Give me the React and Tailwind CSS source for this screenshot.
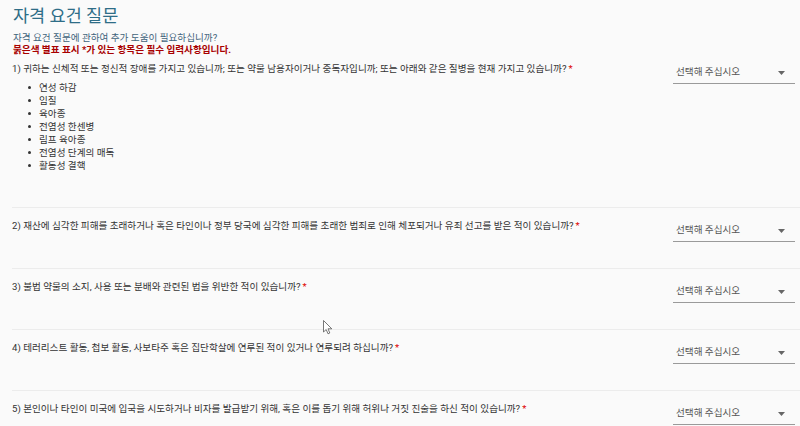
import React from "react";

const FONT = { fontFamily: 'Roboto, "Noto Sans CJK KR", "Noto Sans", sans-serif' };

function Select() {
  return (
    <div className="w-[122px] shrink-0 mt-[6px] mr-[5px] h-[22px] border-b border-[#9a9a9a] flex items-center justify-between pl-[3px] pr-[10px]">
      <span className="text-[9.6px] text-[#555]">선택해 주십시오</span>
      <svg width="7" height="4" viewBox="0 0 7 4"><path d="M0 0 L7 0 L3.5 4 Z" fill="#666" /></svg>
    </div>
  );
}

function Row({ num, text, children, h, first }) {
  return (
    <div className={`flex justify-between items-start ${first ? "" : "border-t border-[#ececec]"} ${h}`}>
      <div className={first ? "pt-[7px]" : "pt-[12px]"}>
        <p className="text-[9.6px] leading-[12px] text-[#333]">
          {num}) {text}<span className="text-[#d00] ml-[2px]">*</span>
        </p>
        {children}
      </div>
      <div className={first ? "pt-[0px]" : "pt-[6px]"}>
        <Select />
      </div>
    </div>
  );
}

export default function App() {
  const items = ["연성 하감", "임질", "육아종", "전염성 한센병", "림프 육아종", "전염성 단계의 매독", "활동성 결핵"];
  return (
    <div className="w-[800px] h-[426px] bg-[#fafafa] overflow-hidden relative" style={FONT}>
      <div className="pl-[12px]">
        <h1 className="text-[17.5px] leading-[30px] text-[#2e6d87] pl-[1px] pt-[1px]">자격 요건 질문</h1>
        <p className="text-[9.6px] leading-[12px] text-[#41637a] mt-[1px] pl-[1px]">자격 요건 질문에 관하여 추가 도움이 필요하십니까?</p>
        <p className="text-[9.6px] leading-[12px] text-[#a80000] font-bold pl-[1px]">붉은색 별표 표시 *가 있는 항목은 필수 입력사항입니다.</p>
        <Row first num="1" h="h-[151px]" text="귀하는 신체적 또는 정신적 장애를 가지고 있습니까; 또는 약물 남용자이거나 중독자입니까; 또는 아래와 같은 질병을 현재 가지고 있습니까?">
          <ul className="mt-[5.5px] pl-[16px]">
            {items.map((t) => (
              <li key={t} className="flex items-center text-[9.6px] leading-[13px] text-[#333]">
                <span className="w-[3px] h-[3px] rounded-full bg-[#333] mr-[8px]" />
                {t}
              </li>
            ))}
          </ul>
        </Row>
        <Row num="2" h="h-[61px]" text="재산에 심각한 피해를 초래하거나 혹은 타인이나 정부 당국에 심각한 피해를 초래한 범죄로 인해 체포되거나 유죄 선고를 받은 적이 있습니까?" />
        <Row num="3" h="h-[61px]" text="불법 약물의 소지, 사용 또는 분배와 관련된 법을 위반한 적이 있습니까?" />
        <Row num="4" h="h-[61px]" text="테러리스트 활동, 첩보 활동, 사보타주 혹은 집단학살에 연루된 적이 있거나 연루되려 하십니까?" />
        <Row num="5" h="h-[61px]" text="본인이나 타인이 미국에 입국을 시도하거나 비자를 발급받기 위해, 혹은 이를 돕기 위해 허위나 거짓 진술을 하신 적이 있습니까?" />
      </div>
      <svg className="absolute left-[323px] top-[320px]" width="10" height="15" viewBox="0 0 10 15">
        <path d="M0.5 0.5 L0.5 12 L3.2 9.5 L5 13.8 L6.8 13 L5 8.8 L8.8 8.8 Z" fill="#fff" stroke="#555" strokeWidth="0.8" />
      </svg>
    </div>
  );
}
